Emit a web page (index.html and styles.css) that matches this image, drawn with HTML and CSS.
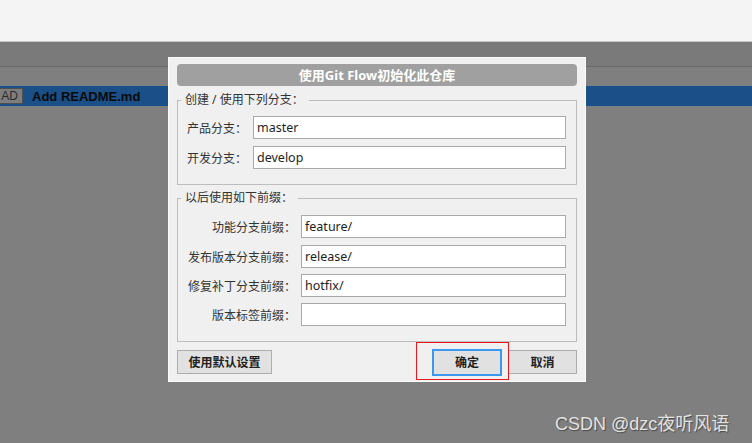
FILE: index.html
```html
<!DOCTYPE html>
<html lang="zh-CN">
<head>
<meta charset="utf-8">
<title>Git Flow</title>
<link rel="stylesheet" href="styles.css">
</head>
<body>
<div class="app">
  <div class="topbar"></div>
  <div class="toolbar"></div>
  <div class="list">
    <div class="list-gap"></div>
    <div class="commit-row">
      <span class="ref-tag">AD</span>
      <span class="commit-msg">Add README.md</span>
    </div>
  </div>

  <div class="dialog">
    <div class="dialog-title">使用Git Flow初始化此仓库</div>

    <fieldset class="group">
      <legend class="group-legend">创建 / 使用下列分支：</legend>
      <div class="group-body branches">
        <div class="field"><span class="label">产品分支：</span><span class="input">master</span></div>
        <div class="field"><span class="label">开发分支：</span><span class="input">develop</span></div>
      </div>
    </fieldset>

    <fieldset class="group">
      <legend class="group-legend">以后使用如下前缀：</legend>
      <div class="group-body prefixes">
        <div class="field"><span class="label">功能分支前缀：</span><span class="input">feature/</span></div>
        <div class="field"><span class="label">发布版本分支前缀：</span><span class="input">release/</span></div>
        <div class="field"><span class="label">修复补丁分支前缀：</span><span class="input">hotfix/</span></div>
        <div class="field"><span class="label">版本标签前缀：</span><span class="input"></span></div>
      </div>
    </fieldset>

    <div class="actions">
      <button class="btn btn-defaults">使用默认设置</button>
      <span class="spacer"></span>
      <button class="btn btn-ok">确定</button>
      <button class="btn btn-cancel">取消</button>
    </div>
  </div>

  <div class="highlight"></div>
  <div class="watermark">CSDN @dzc夜听风语</div>
</div>
</body>
</html>
```
FILE: styles.css
```css
* { box-sizing: border-box; }
html, body { margin: 0; padding: 0; }
body {
  width: 752px;
  height: 443px;
  overflow: hidden;
  font-family: "Noto Sans", "Noto Sans CJK SC", sans-serif;
  background: #7f7f7f;
}
.app {
  position: relative;
  width: 752px;
  height: 443px;
  display: flex;
  flex-direction: column;
  background: #7f7f7f;
}
.topbar {
  height: 42px;
  background: #f4f4f4;
  border-bottom: 1px solid #c6c6c6;
}
.toolbar {
  height: 25px;
  background: #7a7a7a;
  border-bottom: 1px solid #6a6a6a;
}
.list { display: flex; flex-direction: column; }
.list-gap { height: 19px; background: #7f7f7f; }
.commit-row {
  height: 20px;
  background: #1b4f87;
  display: flex;
  align-items: center;
}
.ref-tag {
  width: 23px;
  height: 16px;
  background: #7e7e7e;
  border: 1px solid #4f4f4f;
  border-left: none;
  color: #2a2a2a;
  font-family: "Liberation Sans", sans-serif;
  font-size: 12px;
  line-height: 14px;
  text-align: right;
  padding-right: 4px;
  overflow: hidden;
  white-space: nowrap;
}
.commit-msg {
  margin-left: 9px;
  font-family: "Liberation Sans", sans-serif;
  font-weight: bold;
  font-size: 13px;
  color: #0a0a0a;
}

.dialog {
  position: absolute;
  left: 168px;
  top: 57px;
  width: 418px;
  height: 325px;
  background: #f0f0f0;
  border: 1px solid #fbfbfb;
  padding: 6px 8px 0 8px;
  display: flex;
  flex-direction: column;
  font-size: 12px;
  color: #222;
}
.dialog-title {
  height: 22px;
  border-radius: 4px;
  background: #a0a0a0;
  color: #fff;
  font-weight: bold;
  font-size: 13px;
  line-height: 22px;
  text-align: center;
}
.group {
  margin: 0;
  padding: 0;
  border: 1px solid #bdbdbd;
  min-width: 0;
}
.group:first-of-type { margin-top: 6px; }
.group + .group { margin-top: 5px; }
.group-legend {
  margin-left: 3px;
  padding: 0 5px 0 4px;
  font-size: 12px;
  line-height: 16px;
  color: #333;
}
.group-body {
  display: flex;
  flex-direction: column;
  padding: 8px 10px 15px 9px;
}
.branches { gap: 7px; }
.prefixes { gap: 6px; padding-top: 9px; }
.prefixes .field:first-child { margin-bottom: 1px; }
.field {
  display: flex;
  align-items: center;
  height: 23px;
}
.label {
  color: #333;
  font-size: 12px;
  white-space: nowrap;
}
.branches .label { width: 66px; }
.prefixes .label { width: 114px; text-align: right; padding-right: 5px; }
.input {
  flex: 1;
  height: 23px;
  background: #fff;
  border: 1px solid #a9a9a9;
  padding: 0 3px;
  font-size: 12.5px;
  line-height: 21px;
  color: #1e1e1e;
}

.actions {
  display: flex;
  align-items: center;
  margin-top: 7px;
  height: 26px;
}
.spacer { flex: 1; }
.btn {
  font-family: "Noto Sans", "Noto Sans CJK SC", sans-serif;
  font-size: 12px;
  font-weight: 600;
  color: #222;
  background: #e1e1e1;
  border: 1px solid #adadad;
  height: 24px;
  padding: 0;
  margin: 0;
}
.btn-defaults { width: 95px; }
.btn-ok {
  width: 70px;
  height: 27px;
  border: 2px solid #3b98ef;
  margin-right: 6px;
}
.btn-cancel { width: 69px; }

.highlight {
  position: absolute;
  left: 416px;
  top: 342px;
  width: 93px;
  height: 38px;
  border: 1px solid #e8181c;
}
.watermark {
  position: absolute;
  left: 555px;
  top: 409px;
  font-family: "Liberation Sans", "Noto Sans CJK SC", sans-serif;
  font-size: 18px;
  color: #e2e2e2;
  text-shadow: 1px 1px 1px #4a4a4a;
  white-space: nowrap;
}
```
